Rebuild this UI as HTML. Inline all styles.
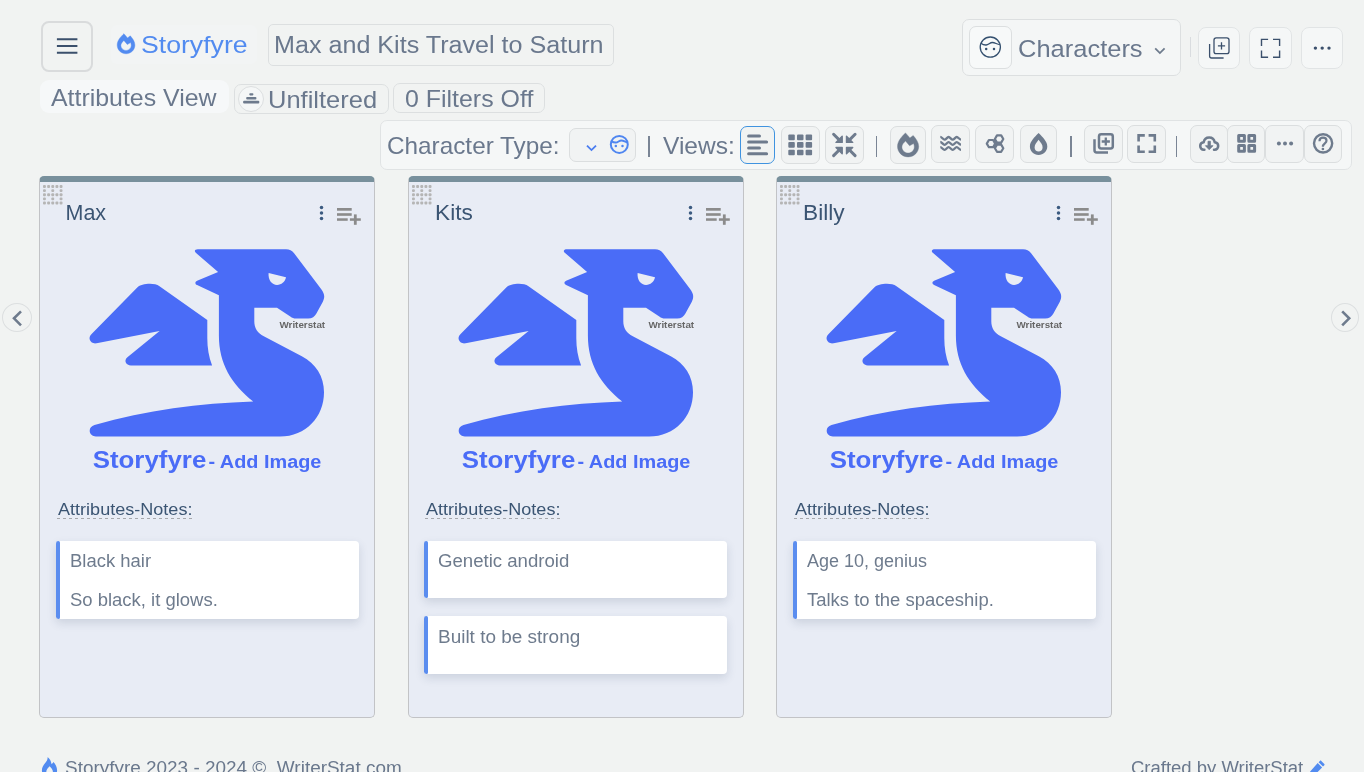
<!DOCTYPE html>
<html lang="en">
<head>
<meta charset="utf-8">
<title>Storyfyre - Characters</title>
<style>
*{box-sizing:border-box;margin:0;padding:0}
html,body{width:1364px;height:772px;overflow:hidden}
body{background:#f1f3f2;font-family:"Liberation Sans",sans-serif;color:#6a788d;position:relative}
#app{position:absolute;left:0;top:0;width:1364px;height:772px;will-change:transform}
.abs{position:absolute}
.txt{position:absolute;white-space:nowrap;line-height:1;transform-origin:0 0}
.box{position:absolute;border:1px solid #dcdfe0;border-radius:7px;background:#f4f6f6}
.btn{position:absolute;border:1px solid #dbdedf;border-radius:7px;background:#f1f3f3}
svg{display:block;position:absolute;overflow:visible}
.ico{left:0;top:0;width:1364px;height:772px;pointer-events:none}
/* header */
#menu{left:41px;top:21px;width:52px;height:51px;border:2px solid #d9dbdc;border-radius:8px;background:#f1f3f2}
#brand{color:#528bf0}
/* cards */
.card{position:absolute;top:176px;width:336px;height:542px;background:#e8ecf5;border:1px solid #c2c3c6;border-top:6px solid #78909c;border-radius:5px}
.card h3{position:absolute;left:25.5px;top:20.800px;font-size:21.500px;font-weight:400;color:#3b5573;line-height:1;white-space:nowrap;transform-origin:0 0;transform:scaleX(1.010)}
.dots{left:3px;top:3px;width:19.300px;height:19.300px}
.keb{left:279px;top:22.900px;width:5px;height:16px}
.pla{left:297.200px;top:26px;width:24px;height:17px}
.pic{left:-1px;top:0;width:336px;height:300px}
.an{position:absolute;left:17px;top:318.700px;width:135px;height:18.300px;background:repeating-linear-gradient(90deg,#a6a8ac 0 3px,transparent 3px 6px) 0 100%/100% 1px no-repeat}
.an span{position:absolute;left:.6px;top:0;font-size:16.500px;color:#3b5573;line-height:1;white-space:nowrap;transform-origin:0 0;transform:scaleX(1.094)}
.note{position:absolute;left:16px;width:303px;background:#fff;border-radius:4px;box-shadow:0 4px 10px rgba(40,60,95,.15);font-size:17.500px;color:#6e7b8d}
.note::before{content:"";position:absolute;left:0;top:0;bottom:0;width:4px;background:#5b8def;border-radius:3px 2px 2px 3px}
.note p{position:absolute;left:14px;white-space:nowrap;line-height:1;transform-origin:0 0;transform:scaleX(1.055)}
.sep{position:absolute;width:1.800px;background:#7a8595}
</style>
</head>
<body>
<div id="app">
<!-- ===== header ===== -->
<div id="menu" class="abs"></div>
<div class="abs" style="left:111px;top:25px;width:146px;height:39px;border-radius:6px;background:#f2f4f4"></div>
<div id="brand" class="txt" style="left:140.900px;top:33.300px;font-size:24px;transform:scaleX(1.110)">Storyfyre</div>

<div class="box" style="left:268px;top:24px;width:346px;height:42px;border-radius:5px;background:#f1f3f2"></div>
<div class="txt" id="title" style="left:273.900px;top:33.700px;font-size:23.500px;transform:scaleX(1.069)">Max and Kits Travel to Saturn</div>

<div class="box" style="left:962px;top:19px;width:219px;height:57px"></div>
<div class="box" style="left:969px;top:26px;width:43px;height:43px;background:#f7f9f9"></div>
<div class="txt" id="chars" style="left:1017.700px;top:37px;font-size:24.500px;transform:scaleX(1.040)">Characters</div>
<div class="abs" style="left:1190px;top:37px;height:20px;width:1px;background:#d9dcdf"></div>
<div class="box" style="left:1198px;top:27px;width:42px;height:42px;border-radius:8px;background:#f5f7f7;border-color:#e1e4e5"></div>
<div class="box" style="left:1249px;top:27px;width:43px;height:42px;border-radius:8px;background:#f5f7f7;border-color:#e1e4e5"></div>
<div class="box" style="left:1301px;top:27px;width:42px;height:42px;border-radius:8px;background:#f5f7f7;border-color:#e1e4e5"></div>

<!-- ===== sub header ===== -->
<div class="abs" style="left:40px;top:80px;width:189px;height:33px;border-radius:9px;background:#f6f8f9"></div>
<div class="txt" id="av" style="left:51.200px;top:86.400px;font-size:24px;transform:scaleX(1.037)">Attributes View</div>
<div class="box" style="left:234px;top:84px;width:155px;height:30px;background:#f1f3f2"></div>
<div class="abs" style="left:238px;top:86px;width:26px;height:26px;border-radius:50%;border:1px solid #dcdfe0;background:#f5f7f7"></div>
<div class="txt" id="unf" style="left:267.700px;top:88.200px;font-size:24.500px;transform:scaleX(1.041)">Unfiltered</div>
<div class="box" style="left:393px;top:83px;width:152px;height:30px;background:#f1f3f2"></div>
<div class="txt" id="fo" style="left:404.600px;top:87.100px;font-size:24.500px;transform:scaleX(1.017)">0 Filters Off</div>

<!-- ===== toolbar ===== -->
<div class="box" style="left:380px;top:120px;width:972px;height:50px;background:#f5f7f7;border-color:#e0e3e4"></div>
<div class="txt" id="ct" style="left:387px;top:133.600px;font-size:24px;transform:scaleX(1.013)">Character Type:</div>
<div class="btn" style="left:569px;top:128px;width:67px;height:34px"></div>
<div class="sep" style="left:648.200px;top:136px;height:21px"></div>
<div class="txt" id="vw" style="left:663.100px;top:133.600px;font-size:24px;transform:scaleX(1.022)">Views:</div>
<div class="btn" style="left:740px;top:126px;width:35px;height:38px;border-color:#3f93e0;background:#f1f3f2"></div>
<div class="btn" style="left:781px;top:126px;width:39px;height:38px"></div>
<div class="btn" style="left:825px;top:126px;width:39px;height:38px"></div>
<div class="sep" style="left:875.700px;top:136px;height:21px"></div>
<div class="btn" style="left:890px;top:126px;width:36px;height:38px"></div>
<div class="btn" style="left:931px;top:125px;width:39px;height:38px"></div>
<div class="btn" style="left:975px;top:125px;width:39px;height:38px"></div>
<div class="btn" style="left:1020px;top:125px;width:37px;height:38px"></div>
<div class="sep" style="left:1070px;top:136px;height:21px"></div>
<div class="btn" style="left:1084px;top:125px;width:39px;height:38px"></div>
<div class="btn" style="left:1127px;top:125px;width:39px;height:38px"></div>
<div class="sep" style="left:1175.600px;top:136px;height:21px"></div>
<div class="btn" style="left:1190px;top:125px;width:38px;height:38px"></div>
<div class="btn" style="left:1227px;top:125px;width:38px;height:38px"></div>
<div class="btn" style="left:1265px;top:125px;width:39px;height:38px"></div>
<div class="btn" style="left:1304px;top:125px;width:38px;height:38px"></div>

<!-- ===== carousel arrows ===== -->
<div class="abs" style="left:2px;top:303px;width:30px;height:29px;border-radius:50%;border:1px solid #dcdfe0"></div>
<div class="abs" style="left:1331px;top:303px;width:28px;height:29px;border-radius:50%;border:1px solid #dcdfe0"></div>

<!-- ===== cards ===== -->
<svg width="0" height="0" style="position:absolute">
 <defs>
  <g id="dragonshape" transform="translate(-39,-182)">
   <path fill="#4a6cf7" d="M198 249.300H286c3.500 0 6 1.300 8.300 4.200l26.800 35.500c3.600 4.800 4 8.300 1.600 13l-6.300 11.500c-1.600 3-4.300 5-8.200 5H296c-2.200 0-3.800-.6-5.700-2l-13.300-8.800H254.300v13.500c0 7 3.300 11.700 9.500 15l38 20c14 7.400 22.200 20 22.200 36 0 24.500-18 44.300-44 44.300H96c-3.600 0-6.300-2.500-6.300-5.700 0-2.800 1.700-4.800 4.800-5.700 52-15.500 105-21.700 158.700-23.700-22-17.500-34.300-38-34.300-66V295.300l-21.800-10.200c-2.300-1.100-2.300-3.300 0-4.300l21-8.700-22.300-19.300c-1.800-1.600-1.100-3.500 2.200-3.500z"/>
   <path fill="#4a6cf7" d="M137.500 287.300C141 283.800 153.800 282.200 159.500 286.200L207.300 319.900V338C207.300 348 208.800 357 212.100 365.500H131C126 365.500 123.400 360.500 127.400 357.300L159.600 331.100 96.600 343.300C90.600 344.500 87.100 338.100 91.600 334.100Z"/>
   <path fill="#e8ecf5" d="M268.600 273l17.400 4.300c-1 4.600-4.600 7.600-9 7.600-5 0-9-4.600-8.400-11.900z"/>
  </g>
 </defs>
</svg>
<div class="card" style="left:39px">
 <svg class="dots" viewBox="0 0 19.3 19.3"><g fill="#b5b5b5"><rect x="0.00" y="0.00" width="2.9" height="2.9" rx="1"/><rect x="4.15" y="0.00" width="2.9" height="2.9" rx="1"/><rect x="8.30" y="0.00" width="2.9" height="2.9" rx="1"/><rect x="12.45" y="0.00" width="2.9" height="2.9" rx="1"/><rect x="16.60" y="0.00" width="2.9" height="2.9" rx="1"/><rect x="0.00" y="4.15" width="2.9" height="2.9" rx="1"/><rect x="8.30" y="4.15" width="2.9" height="2.9" rx="1"/><rect x="16.60" y="4.15" width="2.9" height="2.9" rx="1"/><rect x="0.00" y="8.30" width="2.9" height="2.9" rx="1"/><rect x="4.15" y="8.30" width="2.9" height="2.9" rx="1"/><rect x="8.30" y="8.30" width="2.9" height="2.9" rx="1"/><rect x="12.45" y="8.30" width="2.9" height="2.9" rx="1"/><rect x="16.60" y="8.30" width="2.9" height="2.9" rx="1"/><rect x="0.00" y="12.45" width="2.9" height="2.9" rx="1"/><rect x="8.30" y="12.45" width="2.9" height="2.9" rx="1"/><rect x="16.60" y="12.45" width="2.9" height="2.9" rx="1"/><rect x="0.00" y="16.60" width="2.9" height="2.9" rx="1"/><rect x="4.15" y="16.60" width="2.9" height="2.9" rx="1"/><rect x="8.30" y="16.60" width="2.9" height="2.9" rx="1"/><rect x="12.45" y="16.60" width="2.9" height="2.9" rx="1"/><rect x="16.60" y="16.60" width="2.9" height="2.9" rx="1"/></g></svg>
 <h3 style="transform:scaleX(1.0)">Max</h3>
 <svg class="keb" style="left:279.0px" viewBox="0 0 5 16"><g fill="#3b5a80"><circle cx="2.5" cy="2.4" r="1.75"/><circle cx="2.5" cy="8" r="1.75"/><circle cx="2.5" cy="13.4" r="1.75"/></g></svg>
 <svg class="pla" style="left:297.2px" viewBox="0 0 24 17"><g fill="#8b8b8b"><rect x="0" y="0" width="14.7" height="2.7"/><rect x="0" y="5.2" width="14.7" height="2.6"/><rect x="0" y="10.3" width="10.7" height="2.5"/><rect x="12.9" y="10.3" width="10.9" height="2.5"/><rect x="16.9" y="6.4" width="2.8" height="10.4"/></g></svg>
 <svg class="pic" viewBox="0 0 336 300"><use href="#dragonshape"/><text x="240.5" y="146.2" font-family="Liberation Sans, sans-serif" font-weight="700" font-size="9.2" fill="#666" textLength="45.6" lengthAdjust="spacingAndGlyphs">Writerstat</text><text x="53.7" y="285.9" font-family="Liberation Sans, sans-serif" font-weight="700" font-size="23.4" fill="#4a6cf7" textLength="113.6" lengthAdjust="spacingAndGlyphs">Storyfyre</text><text x="169.4" y="285.9" font-family="Liberation Sans, sans-serif" font-weight="700" font-size="18" fill="#4a6cf7" textLength="113" lengthAdjust="spacingAndGlyphs">- Add Image</text></svg>
 <div class="an" style="left:17px"><span>Attributes-Notes:</span></div>
 <div class="note" style="left:16px;top:359px;height:78px"><p style="top:12.0px">Black hair</p><p style="top:50.5px">So black, it glows.</p></div>
</div>
<div class="card" style="left:408px">
 <svg class="dots" viewBox="0 0 19.3 19.3"><g fill="#b5b5b5"><rect x="0.00" y="0.00" width="2.9" height="2.9" rx="1"/><rect x="4.15" y="0.00" width="2.9" height="2.9" rx="1"/><rect x="8.30" y="0.00" width="2.9" height="2.9" rx="1"/><rect x="12.45" y="0.00" width="2.9" height="2.9" rx="1"/><rect x="16.60" y="0.00" width="2.9" height="2.9" rx="1"/><rect x="0.00" y="4.15" width="2.9" height="2.9" rx="1"/><rect x="8.30" y="4.15" width="2.9" height="2.9" rx="1"/><rect x="16.60" y="4.15" width="2.9" height="2.9" rx="1"/><rect x="0.00" y="8.30" width="2.9" height="2.9" rx="1"/><rect x="4.15" y="8.30" width="2.9" height="2.9" rx="1"/><rect x="8.30" y="8.30" width="2.9" height="2.9" rx="1"/><rect x="12.45" y="8.30" width="2.9" height="2.9" rx="1"/><rect x="16.60" y="8.30" width="2.9" height="2.9" rx="1"/><rect x="0.00" y="12.45" width="2.9" height="2.9" rx="1"/><rect x="8.30" y="12.45" width="2.9" height="2.9" rx="1"/><rect x="16.60" y="12.45" width="2.9" height="2.9" rx="1"/><rect x="0.00" y="16.60" width="2.9" height="2.9" rx="1"/><rect x="4.15" y="16.60" width="2.9" height="2.9" rx="1"/><rect x="8.30" y="16.60" width="2.9" height="2.9" rx="1"/><rect x="12.45" y="16.60" width="2.9" height="2.9" rx="1"/><rect x="16.60" y="16.60" width="2.9" height="2.9" rx="1"/></g></svg>
 <h3 style="transform:scaleX(1.055)">Kits</h3>
 <svg class="keb" style="left:278.5px" viewBox="0 0 5 16"><g fill="#3b5a80"><circle cx="2.5" cy="2.4" r="1.75"/><circle cx="2.5" cy="8" r="1.75"/><circle cx="2.5" cy="13.4" r="1.75"/></g></svg>
 <svg class="pla" style="left:296.7px" viewBox="0 0 24 17"><g fill="#8b8b8b"><rect x="0" y="0" width="14.7" height="2.7"/><rect x="0" y="5.2" width="14.7" height="2.6"/><rect x="0" y="10.3" width="10.7" height="2.5"/><rect x="12.9" y="10.3" width="10.9" height="2.5"/><rect x="16.9" y="6.4" width="2.8" height="10.4"/></g></svg>
 <svg class="pic" viewBox="0 0 336 300"><use href="#dragonshape"/><text x="240.5" y="146.2" font-family="Liberation Sans, sans-serif" font-weight="700" font-size="9.2" fill="#666" textLength="45.6" lengthAdjust="spacingAndGlyphs">Writerstat</text><text x="53.7" y="285.9" font-family="Liberation Sans, sans-serif" font-weight="700" font-size="23.4" fill="#4a6cf7" textLength="113.6" lengthAdjust="spacingAndGlyphs">Storyfyre</text><text x="169.4" y="285.9" font-family="Liberation Sans, sans-serif" font-weight="700" font-size="18" fill="#4a6cf7" textLength="113" lengthAdjust="spacingAndGlyphs">- Add Image</text></svg>
 <div class="an" style="left:16px"><span>Attributes-Notes:</span></div>
 <div class="note" style="left:15px;top:359px;height:57px"><p style="top:12.0px;transform:scaleX(1.063)">Genetic android</p></div>
 <div class="note" style="left:15px;top:434px;height:58px"><p style="top:13.0px;transform:scaleX(1.083)">Built to be strong</p></div>
</div>
<div class="card" style="left:776px">
 <svg class="dots" viewBox="0 0 19.3 19.3"><g fill="#b5b5b5"><rect x="0.00" y="0.00" width="2.9" height="2.9" rx="1"/><rect x="4.15" y="0.00" width="2.9" height="2.9" rx="1"/><rect x="8.30" y="0.00" width="2.9" height="2.9" rx="1"/><rect x="12.45" y="0.00" width="2.9" height="2.9" rx="1"/><rect x="16.60" y="0.00" width="2.9" height="2.9" rx="1"/><rect x="0.00" y="4.15" width="2.9" height="2.9" rx="1"/><rect x="8.30" y="4.15" width="2.9" height="2.9" rx="1"/><rect x="16.60" y="4.15" width="2.9" height="2.9" rx="1"/><rect x="0.00" y="8.30" width="2.9" height="2.9" rx="1"/><rect x="4.15" y="8.30" width="2.9" height="2.9" rx="1"/><rect x="8.30" y="8.30" width="2.9" height="2.9" rx="1"/><rect x="12.45" y="8.30" width="2.9" height="2.9" rx="1"/><rect x="16.60" y="8.30" width="2.9" height="2.9" rx="1"/><rect x="0.00" y="12.45" width="2.9" height="2.9" rx="1"/><rect x="8.30" y="12.45" width="2.9" height="2.9" rx="1"/><rect x="16.60" y="12.45" width="2.9" height="2.9" rx="1"/><rect x="0.00" y="16.60" width="2.9" height="2.9" rx="1"/><rect x="4.15" y="16.60" width="2.9" height="2.9" rx="1"/><rect x="8.30" y="16.60" width="2.9" height="2.9" rx="1"/><rect x="12.45" y="16.60" width="2.9" height="2.9" rx="1"/><rect x="16.60" y="16.60" width="2.9" height="2.9" rx="1"/></g></svg>
 <h3 style="transform:scaleX(1.055)">Billy</h3>
 <svg class="keb" style="left:279.0px" viewBox="0 0 5 16"><g fill="#3b5a80"><circle cx="2.5" cy="2.4" r="1.75"/><circle cx="2.5" cy="8" r="1.75"/><circle cx="2.5" cy="13.4" r="1.75"/></g></svg>
 <svg class="pla" style="left:297.2px" viewBox="0 0 24 17"><g fill="#8b8b8b"><rect x="0" y="0" width="14.7" height="2.7"/><rect x="0" y="5.2" width="14.7" height="2.6"/><rect x="0" y="10.3" width="10.7" height="2.5"/><rect x="12.9" y="10.3" width="10.9" height="2.5"/><rect x="16.9" y="6.4" width="2.8" height="10.4"/></g></svg>
 <svg class="pic" viewBox="0 0 336 300"><use href="#dragonshape"/><text x="240.5" y="146.2" font-family="Liberation Sans, sans-serif" font-weight="700" font-size="9.2" fill="#666" textLength="45.6" lengthAdjust="spacingAndGlyphs">Writerstat</text><text x="53.7" y="285.9" font-family="Liberation Sans, sans-serif" font-weight="700" font-size="23.4" fill="#4a6cf7" textLength="113.6" lengthAdjust="spacingAndGlyphs">Storyfyre</text><text x="169.4" y="285.9" font-family="Liberation Sans, sans-serif" font-weight="700" font-size="18" fill="#4a6cf7" textLength="113" lengthAdjust="spacingAndGlyphs">- Add Image</text></svg>
 <div class="an" style="left:17px"><span>Attributes-Notes:</span></div>
 <div class="note" style="left:16px;top:359px;height:78px"><p style="top:12.0px;transform:scaleX(1.028)">Age 10, genius</p><p style="top:50.5px">Talks to the spaceship.</p></div>
</div>

<!-- ===== footer ===== -->
<div class="txt" id="f1" style="left:64.500px;top:758.900px;font-size:18px;transform:scaleX(1.052)">Storyfyre 2023 - 2024 ©&nbsp; WriterStat.com</div>
<div class="txt" id="f2" style="left:1130.500px;top:758.900px;font-size:18px;transform:scaleX(1.027)">Crafted by WriterStat</div>

<!-- ===== icons (page coordinates) ===== -->
<svg class="ico" viewBox="0 0 1364 772">
 <!-- hamburger -->
 <g stroke="#3b506c" stroke-width="2" fill="none"><path d="M56.900 39.300h20.500M56.900 46h20.500M56.900 52.800h20.500"/></g>
 <!-- brand flame -->
 <path transform="translate(117.200,33.700) scale(.835)" fill="#528bf0" fill-rule="evenodd" stroke="#528bf0" stroke-width=".5" stroke-linejoin="round" d="M8 0 12.400 5 15.700 2.600C18.500 5.900 21.200 9.600 21.200 13.500 21.200 19.300 16.500 24 10.600 24S0 19.300 0 13.500C0 8.300 4.300 3.500 8 0ZM8 8C6 9.800 4.400 11.800 4.400 14.100 4.400 17.400 7.200 20.100 10.600 20.100S16.800 17.400 16.800 14.100C16.800 12.900 16.600 11.700 16.100 10.600L12.100 12.900Z"/>
 <!-- characters face -->
 <g fill="none" stroke="#34506f" stroke-width="1.300"><circle cx="990.300" cy="47.100" r="10.100"/><path d="M980.900 43.200c1.700 1.300 3.500 1.900 5.200 1.800 2.400-.2 3.800-2.400 6.200-2.500 2.700-.1 4.500 1.900 7.600 2.200"/></g>
 <circle cx="986.200" cy="48.900" r="1.250" fill="#34506f"/><circle cx="994" cy="48.900" r="1.250" fill="#34506f"/>
 <path d="M1155.200 48.400l4.700 4.700 4.700-4.700" fill="none" stroke="#6e7b8d" stroke-width="1.800"/>
 <!-- header: copy-plus -->
 <g fill="none" stroke="#3b506c" stroke-width="1.300"><rect x="1214" y="37.800" width="15" height="15.800" rx="2.200"/><path d="M1221.500 42.200v7.200M1217.900 45.800h7.200M1209.600 44v12c0 1.200.8 2 2 2h12"/></g>
 <!-- header: fullscreen -->
 <g fill="none" stroke="#3b506c" stroke-width="1.400"><path d="M1261.500 46v-6.600h6.600M1273 39.400h6.600V46M1279.600 50.600v6.600H1273M1268.100 57.200h-6.600v-6.600"/></g>
 <!-- header: dots -->
 <g fill="#3b506c"><circle cx="1315.400" cy="48.100" r="1.700"/><circle cx="1322.200" cy="48.100" r="1.700"/><circle cx="1329" cy="48.100" r="1.700"/></g>
 <!-- unfiltered stack -->
 <g fill="#6e7b8d"><rect x="249.300" y="93.200" width="4.100" height="2.200" rx=".8"/><rect x="246.200" y="96.900" width="10.200" height="2.500" rx=".9"/><rect x="243.100" y="100.800" width="16.200" height="2.700" rx="1"/></g>
 <!-- select chevron + face -->
 <path d="M587 145.600l4.500 4.500 4.500-4.500" fill="none" stroke="#4a7df0" stroke-width="1.800"/>
 <g fill="none" stroke="#4f86f0" stroke-width="2"><circle cx="619.300" cy="144.400" r="8.500"/><path d="M611.400 141.100c1.500 1.100 3 1.600 4.500 1.500 2.100-.2 3.300-2.100 5.400-2.200 2.300-.1 3.900 1.600 6.500 1.900"/></g>
 <circle cx="615.800" cy="146" r="1.250" fill="#4f86f0"/><circle cx="622.500" cy="146" r="1.250" fill="#4f86f0"/>
 <!-- view: list -->
 <g stroke="#6e7b8d" stroke-width="3" stroke-linecap="round"><path d="M748.600 135.900h10.900M748.600 141.900h18M748.600 147.900h10.900M748.600 153.800h18"/></g>
 <!-- view: grid 3x3 -->
 <g fill="#6e7b8d"><rect x="788.300" y="134.600" width="6.500" height="5.600" rx="1"/><rect x="797" y="134.600" width="6.500" height="5.600" rx="1"/><rect x="805.600" y="134.600" width="6.500" height="5.600" rx="1"/><rect x="788.300" y="142.100" width="6.500" height="5.600" rx="1"/><rect x="797" y="142.100" width="6.500" height="5.600" rx="1"/><rect x="805.600" y="142.100" width="6.500" height="5.600" rx="1"/><rect x="788.300" y="149.700" width="6.500" height="5.600" rx="1"/><rect x="797" y="149.700" width="6.500" height="5.600" rx="1"/><rect x="805.600" y="149.700" width="6.500" height="5.600" rx="1"/></g>
 <!-- view: compress -->
 <g id="cmp" fill="#6e7b8d" stroke="#6e7b8d" stroke-linejoin="round" stroke-linecap="round"><path stroke-width="1.400" d="M836 142.400h6.200v-6.200z"/><path stroke-width="3" fill="none" d="M833.600 134.300l6.600 6.600"/></g>
 <use href="#cmp" transform="translate(1688.700,0) scale(-1,1)"/>
 <use href="#cmp" transform="translate(0,289.900) scale(1,-1)"/>
 <use href="#cmp" transform="translate(1688.700,289.900) scale(-1,-1)"/>
 <!-- flame -->
 <path transform="translate(897.500,132.900)" fill="#6e7b8d" fill-rule="evenodd" stroke="#6e7b8d" stroke-width=".4" stroke-linejoin="round" d="M8 0 12.400 5 15.700 2.600C18.500 5.900 21.200 9.600 21.200 13.500 21.200 19.300 16.500 24 10.600 24S0 19.300 0 13.500C0 8.300 4.300 3.500 8 0ZM8 8C6 9.800 4.400 11.800 4.400 14.100 4.400 17.400 7.200 20.100 10.600 20.100S16.800 17.400 16.800 14.100C16.800 12.900 16.600 11.700 16.100 10.600L12.100 12.900Z"/>
 <!-- waves -->
 <g fill="none" stroke="#6e7b8d" stroke-width="2.300"><path id="wv" d="M940.300 136.900C941.800 136.900 943.100 139.700 944.600 139.700S947.100 137 948.600 137 951.200 139.700 952.700 139.700 955.200 137 956.700 137 959.400 139.600 961 139.600"/><use href="#wv" y="5.100"/><use href="#wv" y="10.200"/></g>
 <!-- hexagons -->
 <path fill="none" stroke="#6e7b8d" stroke-width="2.200" stroke-linejoin="round" d="M986.80 143.60L988.90 140.00L993.10 140.00L995.20 143.60L993.10 147.20L988.90 147.20ZM994.90 139.00L997.00 135.40L1001.20 135.40L1003.30 139.00L1001.20 142.60L997.00 142.60ZM994.90 148.20L997.00 144.60L1001.20 144.60L1003.30 148.20L1001.20 151.80L997.00 151.80Z"/>
 <!-- drop -->
 <path fill="#6e7b8d" fill-rule="evenodd" d="M1038.600 133c4.200 4.200 8.700 8.600 8.700 13.400 0 4.800-3.900 8.500-8.700 8.500s-8.700-3.700-8.700-8.500c0-4.800 4.500-9.200 8.700-13.400zM1038.600 139.800c-2 2.600-4 4.800-4 7.600 0 2.400 1.800 4.100 4 4.100s4-1.700 4-4.100c0-2.800-2-5-4-7.600z"/>
 <!-- copy-plus (toolbar) -->
 <g fill="none" stroke="#6e7b8d" stroke-width="2.500"><rect x="1099" y="134.300" width="13.800" height="14.100" rx="2.200"/><path d="M1105.800 137.400v8.200M1101.700 141.500h8.200" stroke-width="2.300"/><path d="M1094.500 139.200v11c0 1.400.8 2.200 2.200 2.200h11.300" stroke-linecap="butt"/></g>
 <!-- fullscreen (toolbar) -->
 <g fill="none" stroke="#6e7b8d" stroke-width="2.600"><path d="M1138.600 141.600v-6.200h6.200M1148.600 135.400h6.200v6.200M1154.800 145.500v6.200h-6.200M1144.800 151.700h-6.200v-6.200"/></g>
 <!-- cloud download -->
 <g fill="none" stroke="#6e7b8d" stroke-width="2.500" stroke-linecap="round" stroke-linejoin="round"><path d="M1204.400 149.700h-.7c-2.100 0-3.500-1.700-3.500-3.700 0-2.100 1.500-3.600 3.500-3.800.5-2.800 2.700-4.800 5.500-4.800s5 2 5.500 4.800c2 .2 3.500 1.700 3.500 3.800 0 2-1.400 3.700-3.500 3.700h-.7"/></g>
 <path fill="#6e7b8d" stroke="#6e7b8d" stroke-width=".8" stroke-linejoin="round" d="M1208 141.300h2.400v4.400h2.600l-3.800 4-3.800-4h2.600z"/>
 <!-- grid 2x2 -->
 <g fill="none" stroke="#6e7b8d" stroke-width="3" stroke-linejoin="round"><rect x="1238.700" y="135.600" width="5.700" height="5.700"/><rect x="1248.900" y="135.600" width="5.700" height="5.700"/><rect x="1238.700" y="145.500" width="5.700" height="5.700"/><rect x="1248.900" y="145.500" width="5.700" height="5.700"/></g>
 <!-- dots -->
 <g fill="#6e7b8d"><circle cx="1278.900" cy="143.400" r="2"/><circle cx="1285" cy="143.400" r="2"/><circle cx="1291.100" cy="143.400" r="2"/></g>
 <!-- help -->
 <g fill="none" stroke="#6e7b8d" stroke-width="2.400"><circle cx="1323.100" cy="143.350" r="9.100"/><path d="M1319.500 141.200c0-2 1.500-3.500 3.500-3.500s3.500 1.300 3.500 3.100c0 2.600-3.600 2.700-3.600 5.900" stroke-width="2.200"/></g>
 <circle cx="1322.900" cy="149" r="1.350" fill="#6e7b8d"/>
 <!-- carousel chevrons -->
 <g fill="none" stroke="#6e7b8d" stroke-width="2.600"><path d="M21 311.300l-7 7 7 7M1342.200 311.300l7 7-7 7"/></g>
 <!-- footer flame -->
 <path fill="#528bf0" fill-rule="evenodd" d="M47.600 757c.3 2.600-1.100 4.300-2.600 6.200-1.600 2-3.100 4.200-3.100 7.200 0 4.400 3.400 7.600 7.600 7.600s7.600-3.200 7.600-7.600c0-3.400-1.700-6.500-3.700-8.500-.5 1-1.100 1.700-1.900 2.400-.3-3-1.600-5.500-3.900-7.300zM49.600 766.300c-1.500 1.800-3.300 3.300-3.300 5.500 0 2 1.500 3.300 3.300 3.300s3.300-1.300 3.300-3.300c0-2.200-1.800-3.700-3.300-5.500z"/>
 <!-- footer pencil -->
 <path fill="#528bf0" d="M1321.300 760.900l3 3c.4.400.4 1 0 1.400l-1.300 1.300-4.400-4.400 1.300-1.300c.4-.4 1-.4 1.400 0zM1317.700 763.100l4.400 4.400-8 8-4.700.8.800-4.700z"/>
</svg>
</div>
</body>
</html>
